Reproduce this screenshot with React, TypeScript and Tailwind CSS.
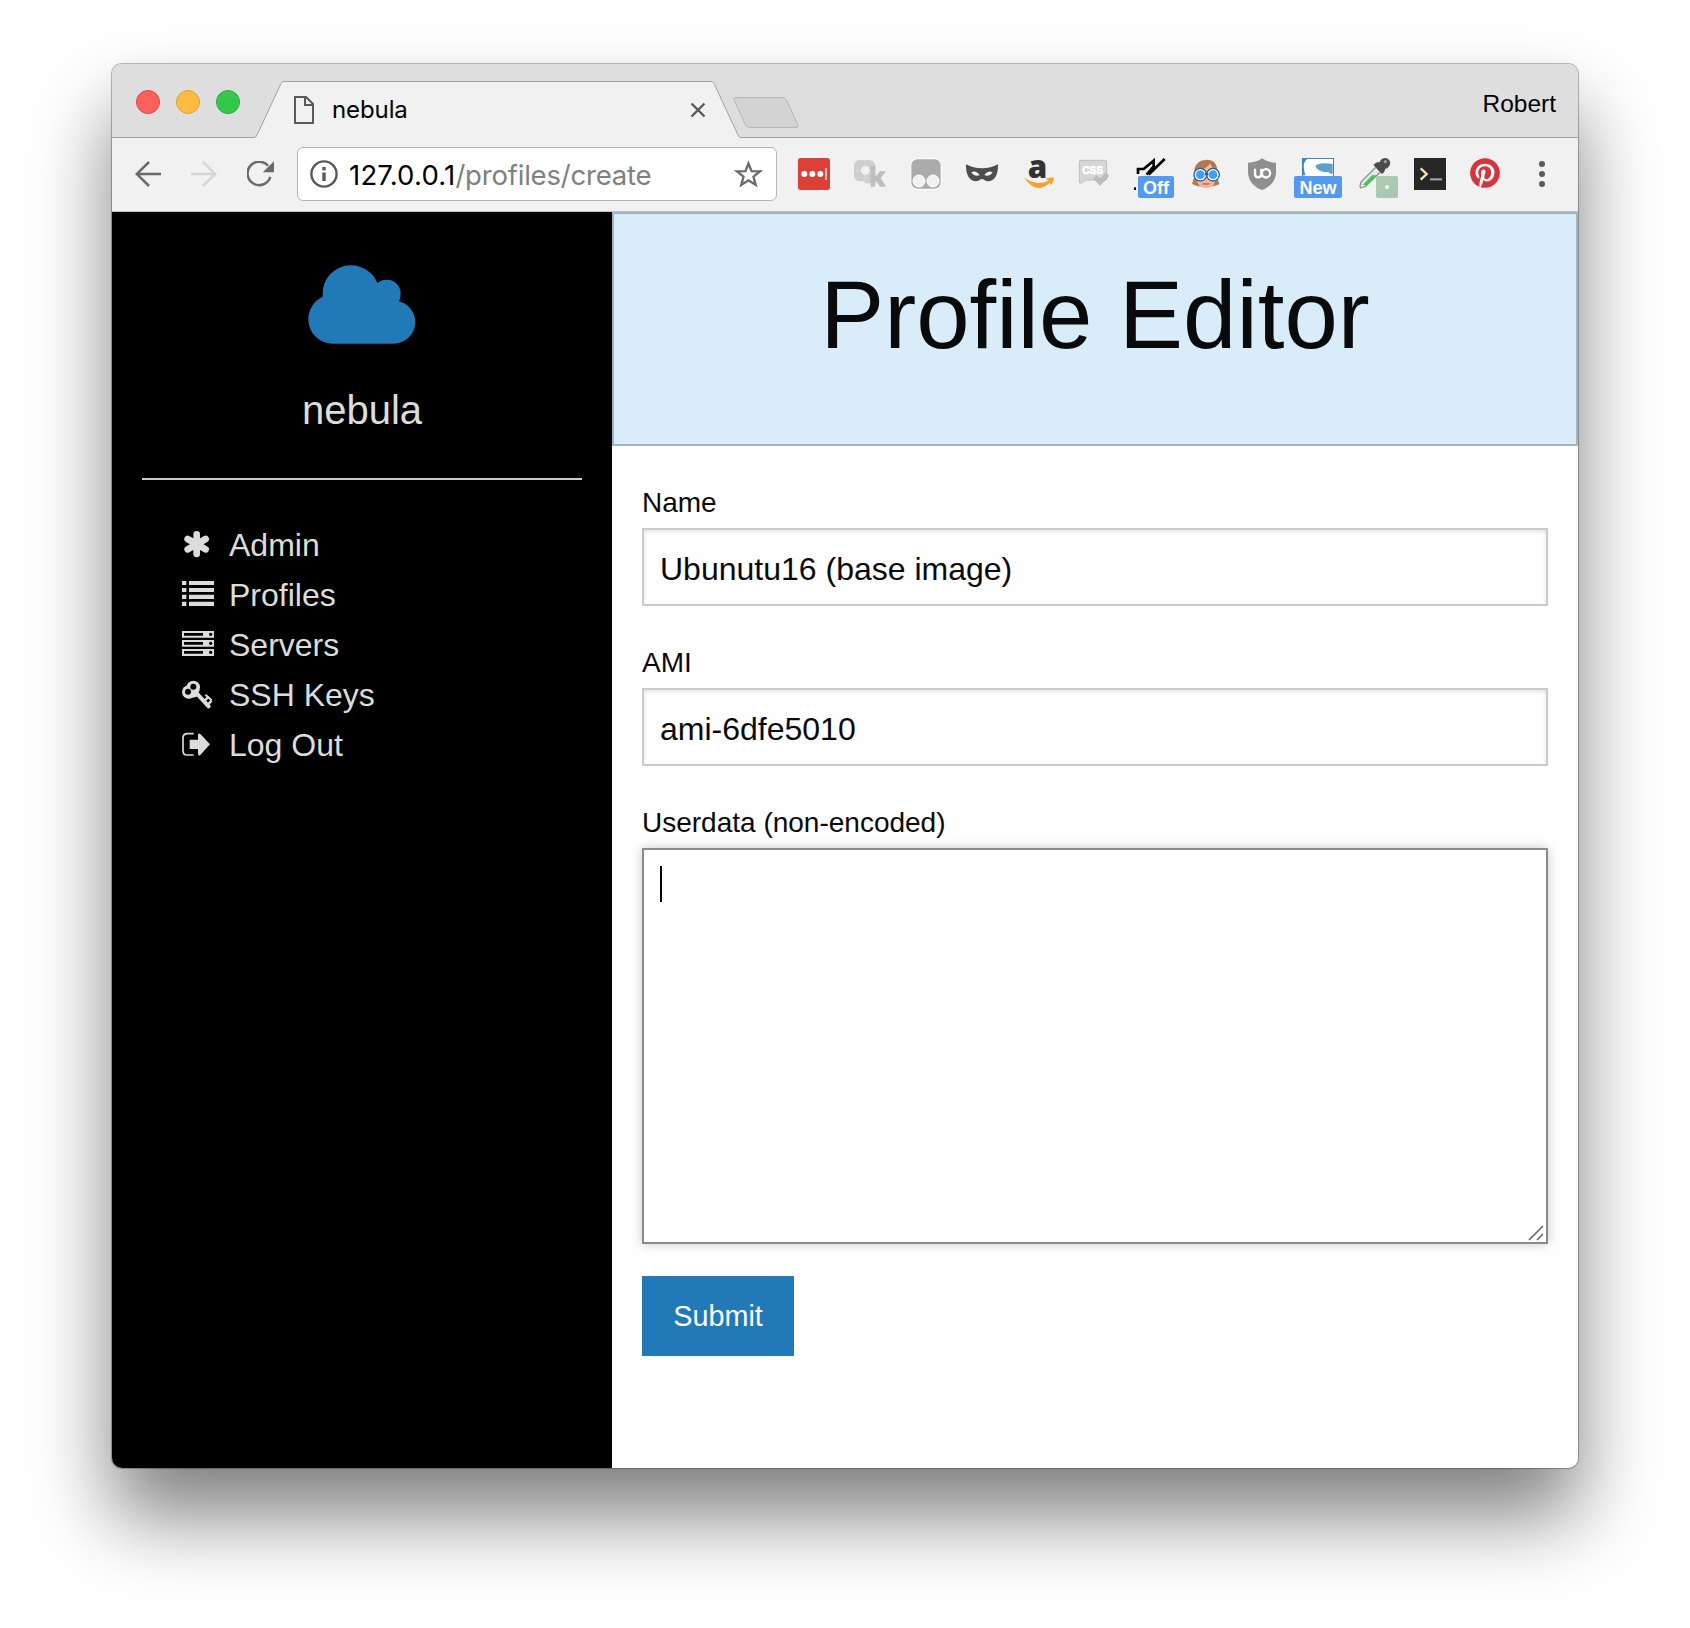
import type { ReactNode } from "react";
import { FaPinterest } from "react-icons/fa";

function Ext({ children, badge }: { children: ReactNode; badge?: ReactNode }) {
  return (
    <div className="relative h-8 w-8 shrink-0">
      <svg viewBox="0 0 96 96" className="block h-8 w-8 overflow-visible">
        {children}
      </svg>
      {badge}
    </div>
  );
}

function Extensions() {
  return (
    <div className="ml-[21px] flex gap-6">
      <Ext>
        <rect width="96" height="96" rx="8" fill="#dc4138" />
        <circle cx="19" cy="48" r="9" fill="#fff" />
        <circle cx="43" cy="48" r="9" fill="#fff" />
        <circle cx="67" cy="48" r="9" fill="#fff" />
        <rect x="81" y="30" width="6" height="36" fill="#f3b9b5" />
      </Ext>
      <Ext>
        <path d="M14 6H48Q64 10 64 26V50L58 76H34L30 70H14Q0 66 0 52V22Q2 8 14 6Z" fill="#cecece" />
        <path d="M33 6V70M0 38H62" stroke="#dcdcdc" strokeWidth="2" />
        <circle cx="34" cy="37" r="13" fill="#f1f1f1" />
        <path d="M50 24H64V56L78 40H96L80 60L96 86H78L66 68L62 86H50Z" fill="#bdbdbd" />
      </Ext>
      <Ext>
        <rect x="1" y="1" width="94" height="94" rx="20" fill="#fff" />
        <rect x="4" y="4" width="88" height="88" rx="18" fill="#ababab" />
        <circle cx="27" cy="69" r="18" fill="#f1f1f1" stroke="#fff" strokeWidth="3" />
        <circle cx="69" cy="69" r="18" fill="#f1f1f1" stroke="#fff" strokeWidth="3" />
      </Ext>
      <Ext>
        <path
          d="M0 19Q22 31 48 31Q74 31 96 19Q97 66 68 70Q60 70 54 65Q48 61 42 65Q36 70 28 70Q-1 66 0 19Z"
          fill="#4d4d4d"
        />
        <path d="M16 43Q30 36 41 52Q24 57 16 43ZM80 43Q66 36 55 52Q72 57 80 43Z" fill="#f1f1f1" />
      </Ext>
      <Ext>
        <text x="17" y="59" fontFamily="Open Sans, sans-serif" fontWeight="800" fontSize="94" fill="#333132">
          a
        </text>
        <path d="M6 58Q42 86 80 68L72 61L95 58Q96 72 86 82L84 74Q40 112 6 58Z" fill="#f7a12b" />
      </Ext>
      <Ext>
        <path d="M8 7H82Q86 7 86 11V62Q86 66 82 66H24L8 76Q4 76 4 72V11Q4 7 8 7Z" fill="#d6d6d6" stroke="#bdbdbd" strokeWidth="3" />
        <text
          x="13"
          y="49"
          fontFamily="Liberation Sans, sans-serif"
          fontWeight="700"
          fontSize="35"
          textLength="62"
          lengthAdjust="spacingAndGlyphs"
          fill="#fff"
          stroke="#fff"
          strokeWidth="2"
        >
          CSS
        </text>
        <path d="M48 62L56 54L66 64L84 46L92 54L66 82Z" fill="#bdbdbd" stroke="#a5a5a5" strokeWidth="2" />
      </Ext>
      <Ext
        badge={
          <span className="absolute left-1 top-[18px] flex h-[22px] w-9 items-center justify-center rounded-[2px] bg-[#5399f2] pt-0.5 font-['Liberation_Sans',sans-serif] text-[18px] font-bold leading-none text-white">
            Off
          </span>
        }
      >
        <path d="M12 48V33H29L59 8V25L38 50M92 3L44 50" fill="none" stroke="#000" strokeWidth="8" />
        <rect x="0" y="88" width="6" height="8" fill="#000" />
      </Ext>
      <Ext>
        <path d="M50 5Q14 8 13 40Q14 60 6 78Q30 90 48 86Q70 88 88 79Q80 60 82 40Q82 6 50 5Z" fill="#b4784a" />
        <path d="M20 40Q50 34 60 16Q68 34 76 38V66Q72 90 48 91Q22 88 20 62Z" fill="#f3b79e" />
        <path d="M34 78Q48 70 62 78Q48 84 34 78Z" fill="#c9776d" />
        <circle cx="31" cy="50" r="16" fill="#429ff2" stroke="#fff" strokeWidth="6" />
        <circle cx="69" cy="50" r="16" fill="#429ff2" stroke="#fff" strokeWidth="6" />
        <circle cx="31" cy="50" r="19" fill="none" stroke="#1c62a8" strokeWidth="4" />
        <circle cx="69" cy="50" r="19" fill="none" stroke="#1c62a8" strokeWidth="4" />
        <path d="M45 48H55" stroke="#1c62a8" strokeWidth="7" />
      </Ext>
      <Ext>
        <path d="M48 1Q66 14 90 14V44Q88 80 48 96Q8 80 6 44V14Q30 14 48 1Z" fill="#8f8f8f" />
        <path d="M27 32V48Q27 58 37 58Q46 58 46 48V32" fill="none" stroke="#fff" strokeWidth="7" />
        <circle cx="60" cy="46" r="12.5" fill="none" stroke="#fff" strokeWidth="7" />
      </Ext>
      <Ext
        badge={
          <span className="absolute -left-2 top-[18px] flex h-[22px] w-12 items-center justify-center rounded-[2px] bg-[#5399f2] pt-0.5 font-['Liberation_Sans',sans-serif] text-[18px] font-bold leading-none text-white">
            New
          </span>
        }
      >
        <rect x="1.5" y="1.5" width="93" height="60" fill="#fff" stroke="#3d88b8" strokeWidth="3" />
        <path d="M0 3H16Q6 10 5 24Q6 40 10 52H0Z" fill="#3d88b8" />
        <path d="M40 24Q50 12 92 18V48Q84 48 78 42Q60 44 50 36Q42 32 40 24Z" fill="#5da0cb" />
      </Ext>
      <Ext
        badge={
          <span className="absolute left-[18px] top-[18px] flex h-[22px] w-[22px] items-center justify-center rounded-[2px] bg-[#a9c9b0]">
            <span className="h-1 w-1 rounded-full bg-white" />
          </span>
        }
      >
        <path d="M6 86L9 72L54 27L68 41L24 84L8 90Z" fill="#e8ece8" stroke="#8d928d" strokeWidth="4" />
        <path d="M14 80L42 52H56L26 82Z" fill="#3fca50" />
        <path d="M46 20L58 12Q66 16 68 6Q78 -4 90 2Q102 14 92 26Q88 32 82 32Q80 44 72 48Z" fill="#4c4c4c" />
        <circle cx="82" cy="11" r="5" fill="#9a9a9a" />
      </Ext>
      <Ext>
        <rect width="96" height="96" fill="#272727" />
        <path d="M20 31L38 48L20 65" fill="none" stroke="#fbe6a8" strokeWidth="7" />
        <rect x="48" y="61" width="36" height="6" fill="#a8a8a8" />
      </Ext>
      <Ext>
        <circle cx="45" cy="45" r="40" fill="#fff" />
        <FaPinterest x="-1" y="-1" size={92} color="#d8323a" />
      </Ext>
      <Ext>
        <circle cx="48" cy="18" r="9" fill="#5a5a5a" />
        <circle cx="48" cy="48" r="9" fill="#5a5a5a" />
        <circle cx="48" cy="78" r="9" fill="#5a5a5a" />
      </Ext>
    </div>
  );
}

function TabStrip() {
  return (
    <div className="flex h-[74px] border-b border-[#a0a0a0] bg-[#dedede]">
      <div className="ml-6 mt-[26px] flex gap-4">
        <span className="h-6 w-6 rounded-full border border-[#e2463f] bg-[#fc605c]" />
        <span className="h-6 w-6 rounded-full border border-[#dfa034] bg-[#fdbc40]" />
        <span className="h-6 w-6 rounded-full border border-[#27aa35] bg-[#34c84a]" />
      </div>
      <div className="relative ml-[14px] mt-4 h-[58px] w-[487px] shrink-0">
        <svg viewBox="0 0 487 58" className="absolute inset-0 h-[58px] w-[487px]">
          <path d="M0 58V57.5Q2 57.5 3 55L27 3.5Q28 1.5 30 1.5H457Q459 1.5 460 3.5L484 55Q485 57.5 487 57.5V58Z" fill="#f1f1f1" />
          <path
            d="M0 57.5Q2 57.5 3 55L27 3.5Q28 1.5 30 1.5H457Q459 1.5 460 3.5L484 55Q485 57.5 487 57.5"
            fill="none"
            stroke="#a0a0a0"
          />
        </svg>
        <div className="relative flex h-full items-center pl-10 pr-[35px] pt-0.5">
          <svg viewBox="0 0 20 28" className="h-7 w-5" fill="none" stroke="#5a5a5a" strokeWidth="2">
            <path d="M1 1H12L19 8V27H1Z" />
            <path d="M11 1V9H19" />
          </svg>
          <span className="ml-[18px] grow font-[Inter,sans-serif] text-[24px] leading-none tracking-[-0.100px] text-black">nebula</span>
          <svg viewBox="0 0 16 16" className="h-4 w-4" stroke="#5a5a5a" strokeWidth="2.4">
            <path d="M1.500 1.500L14.500 14.500M14.500 1.500L1.500 14.500" />
          </svg>
        </div>
      </div>
      <svg viewBox="0 0 68 34" className="-ml-2 mt-[32px] h-[34px] w-[68px]">
        <path
          d="M3 1.500H49Q52 1.500 53.500 4L65 29Q66 31.500 63 31.500H17Q14 31.500 12.500 29L1 4Q0 1.500 3 1.500Z"
          fill="#d3d3d3"
          stroke="#b5b5b5"
        />
      </svg>
      <span className="ml-auto mr-[22px] mt-[26px] font-['Liberation_Sans',sans-serif] text-[24.500px] leading-[28px] text-black">Robert</span>
    </div>
  );
}

function Toolbar() {
  return (
    <div className="flex h-[74px] items-start border-b border-[#c0c0c0] bg-[#f1f1f1] pt-5">
      <svg viewBox="0 0 78 78" className="ml-[23px] mt-[3px] h-[26px] w-[26px]" fill="none" stroke="#6a6a6a" strokeWidth="7.500">
        <path d="M78 39H6M42 3L5 39L42 75" />
      </svg>
      <svg viewBox="0 0 78 78" className="ml-[30px] mt-[3px] h-[26px] w-[26px]" fill="none" stroke="#d5d5d5" strokeWidth="7.500">
        <path d="M0 39H72M36 3L73 39L36 75" />
      </svg>
      <svg viewBox="0 0 82 78" className="ml-[30px] mt-[3px] h-[26px] w-[27px]">
        <path d="M71 48A35.500 35.500 0 1 1 64 14" fill="none" stroke="#6a6a6a" strokeWidth="7.500" />
        <path d="M82 0V34H48Z" fill="#6a6a6a" />
      </svg>
      <div className="-mt-[11px] ml-[23px] flex h-[54px] w-[480px] items-center rounded-[6px] border border-[#b5b5b5] bg-white pl-3 pr-[13px]">
        <svg viewBox="0 0 28 28" className="h-7 w-7">
          <circle cx="14" cy="14" r="12.600" fill="none" stroke="#5a5a5a" strokeWidth="2.400" />
          <rect x="12.300" y="7" width="3.400" height="3.400" fill="#5a5a5a" />
          <rect x="12.300" y="12.500" width="3.400" height="8.500" fill="#5a5a5a" />
        </svg>
        <div className="ml-[11px] grow whitespace-nowrap pt-[3px] font-[Inter,sans-serif] text-[27.500px] leading-none tracking-[-0.200px] text-[#808080]">
          <span className="tracking-[0.200px] text-black">127.0.0.1</span>/profiles/create
        </div>
        <svg viewBox="0 0 88 84" className="h-7 w-[29px]" fill="none" stroke="#6a6a6a" strokeWidth="7">
          <path d="M44 10L53 33L79 34L59 50L66 75L44 61L22 75L29 50L9 34L35 33Z" />
        </svg>
      </div>
      <Extensions />
    </div>
  );
}

const menu: { label: string; icon: ReactNode }[] = [
  {
    label: "Admin",
    icon: (
      <path d="M44 13V72M17 27L71 58M17 58L71 27" stroke="currentColor" strokeWidth="20" strokeLinecap="round" />
    ),
  },
  {
    label: "Profiles",
    icon: (
      <path
        d="M0 3H13V15H0ZM21 3H96V15H21ZM0 24H13V36H0ZM21 24H96V36H21ZM0 44H13V57H0ZM21 44H96V57H21ZM0 65H13V78H0ZM21 65H96V78H21Z"
        fill="currentColor"
      />
    ),
  },
  {
    label: "Servers",
    icon: (
      <g>
        <path d="M0 3H96V23H0ZM0 30H96V50H0ZM0 57H96V78H0Z" fill="currentColor" />
        <path d="M6 9H63V17H6ZM6 36H63V44H6ZM6 63H63V71H6Z" fill="#000" />
        <circle cx="86" cy="13" r="5" fill="#000" />
        <circle cx="86" cy="40" r="5" fill="#000" />
        <circle cx="86" cy="67" r="5" fill="#000" />
      </g>
    ),
  },
  {
    label: "SSH Keys",
    icon: (
      <g fill="none" stroke="currentColor">
        <path d="M44 40L80 79" strokeWidth="12" strokeLinecap="round" />
        <path d="M68 62L80 50M78 73L89 62" strokeWidth="7" />
        <path d="M70 44L89 61" strokeWidth="6" />
        <g fill="currentColor" stroke="none">
          <circle cx="34" cy="22" r="20" />
          <circle cx="20" cy="36" r="20" />
          <path d="M40 40L20 56L44 50L54 28Z" />
        </g>
        <g fill="#000" stroke="none">
          <circle cx="34" cy="20" r="9" />
          <circle cx="18" cy="35" r="9" />
        </g>
      </g>
    ),
  },
  {
    label: "Log Out",
    icon: (
      <g>
        <path d="M35 11H16Q3 11 3 24V62Q3 75 16 75H35" fill="none" stroke="currentColor" strokeWidth="5" />
        <path d="M23 29H48V14Q50 8 55 12L84 43L55 75Q50 79 48 73V57H23Z" fill="currentColor" />
      </g>
    ),
  },
];

function Sidebar() {
  return (
    <aside className="flex w-[500px] shrink-0 flex-col bg-black px-[30px] text-[#dcdcdc]">
      <svg viewBox="595 75 324 237" className="mx-auto mt-[53px] h-[79px] w-[108px]">
        <path
          d="M669 311A73 73 0 0 1 596 238A74 74 0 0 1 639 170V160A84 84 0 0 1 723 76A86 86 0 0 1 803 129A42 42 0 0 1 832 119A41 41 0 0 1 873 160Q873 174 868 184A65 65 0 0 1 917 246A65 65 0 0 1 852 311Z"
          fill="#2179b8"
        />
      </svg>
      <div className="mt-[43px] text-center text-[40px] leading-[46px]">nebula</div>
      <hr className="mt-[45px] border-0 border-t-2 border-[#cacaca]" />
      <ul className="mt-[40px] pl-10">
        {menu.map((m) => (
          <li key={m.label} className="flex h-[50px] items-center">
            <svg viewBox="0 0 96 96" className="mt-0.5 h-8 w-8 overflow-visible">
              {m.icon}
            </svg>
            <span className="ml-[15px] text-[32px] leading-[50px]">{m.label}</span>
          </li>
        ))}
      </ul>
    </aside>
  );
}

function Field({ label, value }: { label: string; value: string }) {
  return (
    <div className="mb-[32px]">
      <div className="text-[28px] leading-[50px]">{label}</div>
      <div className="h-[78px] border-2 border-[#cacaca] bg-[#fefefe] px-4 text-[32px] leading-[78px] shadow-[inset_0_2px_4px_rgba(10,10,10,0.1)]">
        {value}
      </div>
    </div>
  );
}

export default function App() {
  return (
    <div className="h-[1628px] w-[1690px] overflow-hidden bg-white px-28 pt-16">
      <div className="h-[1404px] w-[1466px] rounded-[10px] shadow-[0_0_0_1px_rgba(0,0,0,0.2),0_0_2px_rgba(0,0,0,0.3),0_48px_80px_rgba(0,0,0,0.5)]">
        <div className="flex h-full flex-col overflow-hidden rounded-[10px]">
          <TabStrip />
          <Toolbar />
          <div className="flex grow font-['Liberation_Sans',sans-serif]">
            <Sidebar />
            <main className="grow bg-[#fefefe] text-[#0a0a0a]">
              <div className="h-[234px] border-2 border-[#a4b4c0] bg-[#d8ecfa] pt-[34px] text-center text-[96px] leading-[134px]">
                Profile Editor
              </div>
              <form className="px-[30px] pt-8">
                <Field label="Name" value="Ubunutu16 (base image)" />
                <Field label="AMI" value="ami-6dfe5010" />
                <div className="text-[28px] leading-[50px]">Userdata (non-encoded)</div>
                <div className="relative h-[396px] border-2 border-[#8a8a8a] bg-[#fefefe] px-4 pt-4 shadow-[0_0_10px_#cacaca]">
                  <div className="h-9 w-0.5 bg-black" />
                  <svg viewBox="0 0 16 16" className="absolute bottom-px right-0.5 h-4 w-4" stroke="#5c5c5c" strokeWidth="1.500">
                    <path d="M1 15L15 1M9 15L15 9" />
                  </svg>
                </div>
                <button type="button" className="mt-8 block h-20 w-[152px] bg-[#2179b8] text-[28.800px] leading-none text-[#fefefe]">
                  Submit
                </button>
              </form>
            </main>
          </div>
        </div>
      </div>
    </div>
  );
}
